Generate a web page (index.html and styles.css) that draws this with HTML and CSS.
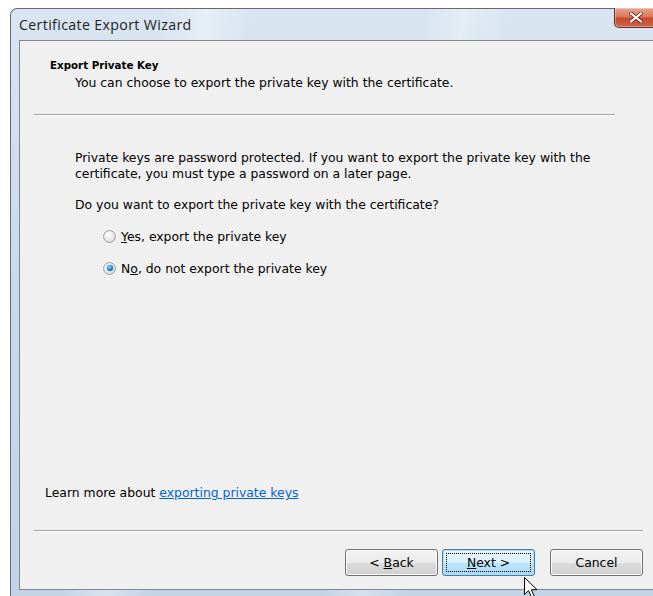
FILE: index.html
```html
<!DOCTYPE html>
<html lang="en">
<head>
<meta charset="utf-8">
<title>Certificate Export Wizard</title>
<link rel="stylesheet" href="styles.css">
</head>
<body>
<div class="window">
  <div class="titlebar">
    <span class="title">Certificate Export Wizard</span>
    <button class="close" aria-label="Close">
      <svg width="14" height="11" viewBox="0 0 14 11">
        <path d="M2 1.5 L12 9.5 M12 1.5 L2 9.5" stroke="#6b2a1c" stroke-width="3.6" stroke-linecap="square"/>
        <path d="M2 1.5 L12 9.5 M12 1.5 L2 9.5" stroke="#ffffff" stroke-width="2" stroke-linecap="square"/>
      </svg>
    </button>
  </div>
  <div class="client">
    <div class="header">
      <div class="heading">Export Private Key</div>
      <div class="subheading">You can choose to export the private key with the certificate.</div>
    </div>
    <div class="sep sep-top"></div>
    <div class="body">
      <p class="para">Private keys are password protected. If you want to export the private key with the certificate, you must type a password on a later page.</p>
      <p class="question">Do you want to export the private key with the certificate?</p>
      <label class="radio first"><span class="dot"></span><span><u>Y</u>es, export the private key</span></label>
      <label class="radio checked"><span class="dot"></span><span>N<u>o</u>, do not export the private key</span></label>
    </div>
    <div class="learn">Learn more about <a href="#">exporting private keys</a></div>
    <div class="sep sep-bottom"></div>
    <div class="buttons">
      <button class="btn"><span>&lt; <u>B</u>ack</span></button>
      <button class="btn default"><span class="focus"><span><u>N</u>ext &gt;</span></span></button>
      <button class="btn cancel"><span>Cancel</span></button>
    </div>
  </div>
</div>
<svg class="cursor" width="15" height="24" viewBox="0 0 15 24">
  <path d="M0.5 0.5 L0.5 17.5 L4.6 13.6 L7.6 20.6 L10.3 19.4 L7.4 12.7 L13 12.7 Z" fill="#ffffff" stroke="#000000" stroke-width="1" stroke-linejoin="miter"/>
</svg>
</body>
</html>
```
FILE: styles.css
```css
html, body {
  margin: 0;
  padding: 0;
  background: #ffffff;
  width: 653px;
  height: 596px;
  overflow: hidden;
}

body {
  position: relative;
  font-family: "DejaVu Sans", "Liberation Sans", sans-serif;
  font-size: 12.4px;
  color: #000000;
}

/* window frame: glassy light blue with dark outer outline */
.window {
  margin: 8px 0 0 10px;
  width: 652px;
  height: 600px;
  box-sizing: border-box;
  border: 1px solid #5f6b78;
  border-right: none;
  border-radius: 7px 0 0 0;
  background:
    linear-gradient(100deg, rgba(255,255,255,0) 20%, rgba(255,255,255,0.35) 26%, rgba(255,255,255,0) 32%, rgba(255,255,255,0) 55%, rgba(255,255,255,0.3) 60%, rgba(255,255,255,0) 66%),
    linear-gradient(180deg, #d9e5f1 0%, #ccdbea 40%, #c3d3e5 100%);
  padding: 0 0 0 8px;
  display: flex;
  flex-direction: column;
}

.titlebar {
  height: 31px;
  display: flex;
  align-items: flex-start;
}

.title {
  font-family: "Open Sans", "Noto Sans", sans-serif;
  font-size: 14.2px;
  color: #1e1e1e;
  margin-top: 6px;
  letter-spacing: 0.35px;
}

.close {
  margin-left: auto;
  margin-right: 4px;
  width: 44px;
  height: 20px;
  margin-top: -1px;
  border: 1px solid #6c2a22;
  border-top: none;
  border-radius: 0 0 5px 5px;
  background: linear-gradient(180deg, #e8a493 0%, #d9785f 45%, #c74a2d 55%, #d0664a 100%);
  box-shadow: inset 0 0 0 1px rgba(255,255,255,0.35);
  display: flex;
  align-items: center;
  justify-content: center;
  padding: 0;
}

.client {
  flex: 1;
  background: #f0f0f0;
  border: 1px solid #7f8791;
  border-right: none;
  box-sizing: border-box;
  max-height: 550px;
  display: flex;
  flex-direction: column;
  padding-left: 14px;
}

.header {
  padding-top: 17px;
  height: 57px;
  box-sizing: border-box;
}

.heading {
  font-weight: bold;
  font-size: 10.3px;
  padding-left: 16px;
  line-height: 14px;
}

.subheading {
  padding-left: 41px;
  line-height: 17px;
  margin-top: 2px;
}

.sep {
  height: 0;
  border-top: 1px solid #a0a0a0;
  border-bottom: 1px solid #ffffff;
}

.sep-top {
  width: 581px;
  margin-top: 16px;
}

.body {
  padding: 34px 0 0 41px;
  flex: 1;
}

.body p {
  margin: 0;
  line-height: 16px;
}

.para {
  width: 560px;
}

.question {
  margin-top: 15px !important;
}

.radio {
  display: flex;
  align-items: center;
  gap: 5px;
  padding-left: 28px;
  height: 18px;
}

.radio.first {
  margin-top: 14px;
}

.radio + .radio {
  margin-top: 14px;
}

.dot {
  width: 11px;
  height: 11px;
  border-radius: 50%;
  border: 1px solid #9c9c9c;
  background: radial-gradient(circle at 40% 35%, #ffffff 0%, #e6e6e6 55%, #c9c9c9 100%);
  box-shadow: 0 0 0 1px #f7f7f7;
  display: flex;
  align-items: center;
  justify-content: center;
}

.radio.checked .dot::after {
  content: "";
  width: 6px;
  height: 6px;
  border-radius: 50%;
  background: radial-gradient(circle at 40% 35%, #9ad6ff 0%, #1a78c8 55%, #0b4f96 100%);
  box-shadow: 0 0 1px #0b4f96;
}

.learn {
  padding-left: 11px;
  margin-bottom: 30px;
}

.learn a {
  color: #0066cc;
  text-decoration: underline;
}

.sep-bottom {
  width: 609px;
}

.buttons {
  display: flex;
  padding: 17px 0 0 311px;
  height: 57px;
  box-sizing: border-box;
}

.btn {
  font-family: inherit;
  font-size: 12.4px;
  color: #000;
  height: 27px;
  width: 93px;
  border: 1px solid #707070;
  border-radius: 3px;
  background: linear-gradient(180deg, #f2f2f2 0%, #ebebeb 50%, #dddddd 51%, #cfcfcf 100%);
  box-shadow: inset 0 0 0 1px #fcfcfc;
  padding: 0;
  display: flex;
  align-items: center;
  justify-content: center;
}

.btn.default {
  margin-left: 4px;
  border-color: #3c7fb1;
  background: linear-gradient(180deg, #eaf6fd 0%, #d9f0fc 50%, #bee6fd 51%, #a7d9f5 100%);
  box-shadow: inset 0 0 0 1px #b5dbf2;
}

.focus {
  border: 1px dotted #000;
  width: 85px;
  height: 19px;
  display: flex;
  align-items: center;
  justify-content: center;
  box-sizing: border-box;
}

.btn.cancel {
  margin-left: 15px;
}

.cursor {
  position: absolute;
  left: 524px;
  top: 577px;
}
```
